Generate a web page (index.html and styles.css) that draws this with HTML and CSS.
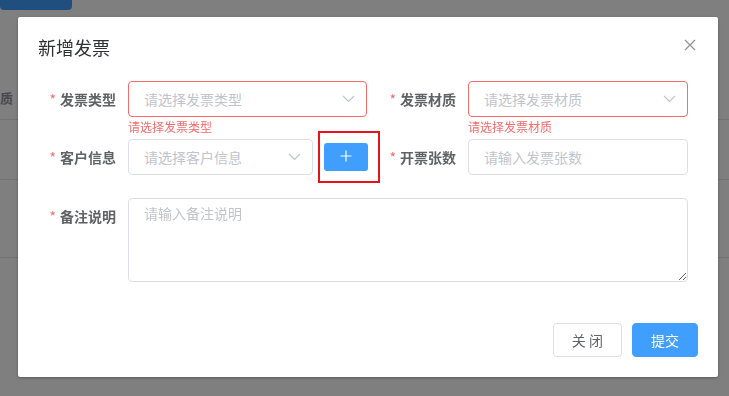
FILE: index.html
```html
<!DOCTYPE html>
<html lang="zh-CN">
<head>
  <meta charset="UTF-8">
  <meta name="viewport" content="width=device-width, initial-scale=1.0">
  <title>新增发票</title>

  <link rel="stylesheet" href="styles.css">
</head>
<body>
  <!-- page underneath the dialog -->
  <div class="page">
    <div class="page-btn"></div>
    <div class="table">
      <div class="table-head"><span>质</span></div>
      <div class="table-row"></div>
      <div class="table-row tall"></div>
    </div>
  </div>

  <div class="mask"></div>

  <div class="dialog">
    <div class="dialog-header">
      <span class="dialog-title">新增发票</span>
      <button class="dialog-close" aria-label="关闭">
        <svg width="12" height="12" viewBox="0 0 12 12"><path d="M1 1L11 11M11 1L1 11" stroke="#909399" stroke-width="1.2" fill="none"/></svg>
      </button>
    </div>

    <div class="dialog-body">
      <div class="form-grid">
        <div class="form-item">
          <label class="form-label"><i>*</i>发票类型</label>
          <div class="form-content">
            <div class="select is-error">
              <span class="placeholder">请选择发票类型</span>
              <svg class="arrow" width="13" height="8" viewBox="0 0 13 8"><path d="M1 1l5.5 5.5L12 1" stroke="#c0c4cc" stroke-width="1.2" fill="none"/></svg>
            </div>
            <div class="form-error">请选择发票类型</div>
          </div>
        </div>

        <div class="form-item">
          <label class="form-label"><i>*</i>发票材质</label>
          <div class="form-content">
            <div class="select is-error">
              <span class="placeholder">请选择发票材质</span>
              <svg class="arrow" width="13" height="8" viewBox="0 0 13 8"><path d="M1 1l5.5 5.5L12 1" stroke="#c0c4cc" stroke-width="1.2" fill="none"/></svg>
            </div>
            <div class="form-error">请选择发票材质</div>
          </div>
        </div>

        <div class="form-item row-2">
          <label class="form-label"><i>*</i>客户信息</label>
          <div class="form-content with-btn">
            <div class="select">
              <span class="placeholder">请选择客户信息</span>
              <svg class="arrow" width="13" height="8" viewBox="0 0 13 8"><path d="M1 1l5.5 5.5L12 1" stroke="#c0c4cc" stroke-width="1.2" fill="none"/></svg>
            </div>
            <div class="add-wrap">
              <button class="btn-add" aria-label="新增客户">
                <svg width="12" height="12" viewBox="0 0 12 12"><path d="M6 0.5V11.5M0.5 6H11.5" stroke="#fff" stroke-width="1.2" fill="none"/></svg>
              </button>
              <span class="mark"></span>
            </div>
          </div>
        </div>

        <div class="form-item row-2">
          <label class="form-label"><i>*</i>开票张数</label>
          <div class="form-content">
            <input class="input" type="text" placeholder="请输入发票张数">
          </div>
        </div>

        <div class="form-item full">
          <label class="form-label"><i>*</i>备注说明</label>
          <div class="form-content">
            <textarea class="textarea" placeholder="请输入备注说明"></textarea>
          </div>
        </div>
      </div>
    </div>

    <div class="dialog-footer">
      <button class="btn">关 闭</button>
      <button class="btn btn-primary">提交</button>
    </div>
  </div>
</body>
</html>
```

FILE: styles.css
```css
body {
  margin: 0;
  font-family: "Noto Sans CJK SC", "Noto Sans", sans-serif;
  background-color: #fff;
  overflow: hidden;
}

/* background page */
.page {
  height: 396px;
}

.page-btn {
  width: 72px;
  height: 10px;
  background-color: #409eff;
  border-radius: 0 0 4px 4px;
}

.table {
  margin-top: 60px;
}

.table-head {
  height: 49px;
  line-height: 56px;
  border-bottom: 1px solid #e4e4e4;
  color: #909399;
  font-size: 13px;
  font-weight: 700;
}

.table-row {
  height: 59px;
  border-bottom: 1px solid #e4e4e4;
}

.table-row.tall {
  height: 77px;
}

.mask {
  position: fixed;
  top: 0;
  left: 0;
  right: 0;
  bottom: 0;
  background-color: rgba(0, 0, 0, 0.5);
}

/* dialog */
.dialog {
  position: absolute;
  left: 18px;
  top: 17px;
  width: 700px;
  background-color: #fff;
  border-radius: 2px;
  box-shadow: 0 1px 3px rgba(0, 0, 0, 0.3);
}

.dialog-header {
  position: relative;
  padding: 18px 20px 12px;
}

.dialog-title {
  display: block;
  font-size: 18px;
  line-height: 24px;
  color: #303133;
}

.dialog-close {
  position: absolute;
  top: 22px;
  right: 22px;
  padding: 0;
  border: none;
  background: none;
  line-height: 0;
  cursor: pointer;
}

.dialog-body {
  padding: 10px 30px 0 20px;
}

.form-grid {
  display: grid;
  grid-template-columns: 329px 310px;
  column-gap: 11px;
}

.form-item {
  display: flex;
  margin-bottom: 22px;
}

.form-item.row-2 {
  margin-bottom: 23px;
}

.form-item.full {
  grid-column: 1 / 3;
}

.form-label {
  width: 90px;
  padding-right: 12px;
  box-sizing: border-box;
  text-align: right;
  font-size: 14px;
  line-height: 36px;
  font-weight: 700;
  color: #606266;
  flex-shrink: 0;
}

.form-label i {
  font-style: normal;
  font-weight: 400;
  color: #f56c6c;
  margin-right: 4px;
}

.form-content {
  position: relative;
  flex: 1;
  min-width: 0;
}

.form-content.with-btn {
  display: flex;
  align-items: center;
  gap: 11px;
  margin-right: -1px;
}

.select,
.input {
  display: flex;
  align-items: center;
  height: 36px;
  box-sizing: border-box;
  border: 1px solid #dcdfe6;
  border-radius: 4px;
  padding: 0 11px 0 15px;
  background-color: #fff;
  font-size: 14px;
}

.select {
  flex: 1;
}

.select.is-error {
  border-color: #f56c6c;
}

.placeholder {
  flex: 1;
  color: #c0c4cc;
}

.input {
  width: 100%;
  font-family: inherit;
  outline: none;
}

.input::placeholder,
.textarea::placeholder {
  color: #c0c4cc;
}

.form-error {
  position: absolute;
  top: 100%;
  left: 0;
  padding-top: 4px;
  font-size: 12px;
  line-height: 1;
  color: #f56c6c;
}

.add-wrap {
  position: relative;
  line-height: 0;
}

.btn-add {
  width: 44px;
  height: 28px;
  border: none;
  border-radius: 3px;
  background-color: #409eff;
  cursor: pointer;
}

/* red annotation around the add button */
.mark {
  position: absolute;
  left: -6px;
  right: -12px;
  top: -12px;
  bottom: -12px;
  border: 2px solid #e5141b;
}

.textarea {
  display: block;
  width: 100%;
  height: 84px;
  box-sizing: border-box;
  padding: 4px 15px;
  border: 1px solid #dcdfe6;
  border-radius: 4px;
  font-family: inherit;
  font-size: 14px;
  line-height: 1.5;
  outline: none;
}

.dialog-footer {
  display: flex;
  justify-content: flex-end;
  gap: 10px;
  padding: 19px 20px 20px;
}

.btn {
  height: 34px;
  padding: 0 18px;
  border: 1px solid #dcdfe6;
  border-radius: 4px;
  background-color: #fff;
  color: #606266;
  font-family: inherit;
  font-size: 14px;
  cursor: pointer;
}

.btn-primary {
  border-color: #409eff;
  background-color: #409eff;
  color: #fff;
}
```
